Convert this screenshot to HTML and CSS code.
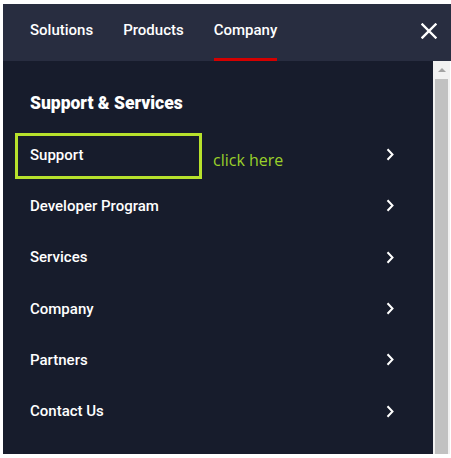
FILE: index.html
```html
<!DOCTYPE html>
<html>
<head>
<meta charset="utf-8">
<link rel="stylesheet" href="styles.css">
</head>
<body>
<div class="frame">
  <header class="header">
    <nav class="nav">
      <a class="nav-item">Solutions</a>
      <a class="nav-item">Products</a>
      <a class="nav-item active">Company</a>
    </nav>
    <button class="close" aria-label="Close">
      <svg width="16" height="16" viewBox="0 0 16 16"><path d="M1.5 1.5 L14.5 14.5 M14.5 1.5 L1.5 14.5" stroke="#fff" stroke-width="2.4" stroke-linecap="square" fill="none"/></svg>
    </button>
  </header>
  <div class="body">
    <div class="panel">
      <h2 class="heading">Support &amp; Services</h2>
      <ul class="list">
        <li class="row"><span>Support</span><svg class="chev" width="8" height="13" viewBox="0 0 8 13"><path d="M1.5 1.2 L6.5 6.5 L1.5 11.8" stroke="#fff" stroke-width="2" fill="none"/></svg></li>
        <li class="row"><span>Developer Program</span><svg class="chev" width="8" height="13" viewBox="0 0 8 13"><path d="M1.5 1.2 L6.5 6.5 L1.5 11.8" stroke="#fff" stroke-width="2" fill="none"/></svg></li>
        <li class="row"><span>Services</span><svg class="chev" width="8" height="13" viewBox="0 0 8 13"><path d="M1.5 1.2 L6.5 6.5 L1.5 11.8" stroke="#fff" stroke-width="2" fill="none"/></svg></li>
        <li class="row"><span>Company</span><svg class="chev" width="8" height="13" viewBox="0 0 8 13"><path d="M1.5 1.2 L6.5 6.5 L1.5 11.8" stroke="#fff" stroke-width="2" fill="none"/></svg></li>
        <li class="row"><span>Partners</span><svg class="chev" width="8" height="13" viewBox="0 0 8 13"><path d="M1.5 1.2 L6.5 6.5 L1.5 11.8" stroke="#fff" stroke-width="2" fill="none"/></svg></li>
        <li class="row"><span>Contact Us</span><svg class="chev" width="8" height="13" viewBox="0 0 8 13"><path d="M1.5 1.2 L6.5 6.5 L1.5 11.8" stroke="#fff" stroke-width="2" fill="none"/></svg></li>
      </ul>
      <div class="highlight"></div>
      <div class="hint">click here</div>
    </div>
    <div class="scrollbar">
      <div class="sb-up"><span class="sb-arrow"></span></div>
      <div class="sb-thumb"></div>
    </div>
  </div>
</div>
</body>
</html>
```

FILE: styles.css
```css
* { box-sizing: border-box; }
html, body { margin: 0; padding: 0; background: #ffffff; }
body { font-family: Roboto, "Liberation Sans", sans-serif; }

.frame {
  margin: 4px 0 0 3px;
  width: 448px;
  height: 450px;
  display: flex;
  flex-direction: column;
}

.header {
  height: 57px;
  flex: none;
  background: #282d40;
  display: flex;
  align-items: stretch;
  justify-content: space-between;
}
.nav {
  display: flex;
  gap: 30px;
  padding-left: 27px;
}
.nav-item {
  display: flex;
  align-items: center;
  color: #ffffff;
  font-size: 15px;
  font-weight: 500;
  padding-bottom: 3px;
  border-bottom: 3px solid transparent;
}
.nav-item.active { border-bottom-color: #d40000; }

.close {
  background: none;
  border: 0;
  padding: 0;
  margin: 0 14px 3px 0;
  display: flex;
  align-items: center;
  cursor: pointer;
}

.body {
  flex: 1;
  display: flex;
  min-height: 0;
}
.panel {
  position: relative;
  flex: 1;
  background: #171c2c;
  padding-top: 32px;
}
.heading {
  margin: 0 0 16px;
  padding-left: 27px;
  color: #ffffff;
  font-size: 17.5px;
  font-weight: 900;
  line-height: 20px;
}
.list { list-style: none; margin: 0; padding: 0; }
.row {
  height: 51.3px;
  display: flex;
  align-items: center;
  justify-content: space-between;
  padding: 0 39px 0 27px;
  color: #ffffff;
  font-size: 15px;
  font-weight: 500;
}
.chev { display: block; }

.highlight {
  position: absolute;
  left: 12px;
  top: 72px;
  width: 187px;
  height: 46px;
  border: 3px solid #b7e12c;
}
.hint {
  position: absolute;
  left: 210px;
  top: 89px;
  font-family: "Open Sans", sans-serif;
  font-size: 16px;
  line-height: 20px;
  color: #9bd12a;
}

.scrollbar {
  width: 17px;
  margin-right: 1px;
  flex: none;
  background: #f1f1f1;
  display: flex;
  flex-direction: column;
  align-items: center;
}
.sb-up {
  height: 18px;
  width: 100%;
  display: flex;
  align-items: center;
  justify-content: center;
}
.sb-arrow {
  width: 0; height: 0;
  border-left: 4px solid transparent;
  border-right: 4px solid transparent;
  border-bottom: 4px solid #a3a3a3;
}
.sb-thumb {
  flex: 1;
  width: 13px;
  background: #c1c1c1;
}
```
